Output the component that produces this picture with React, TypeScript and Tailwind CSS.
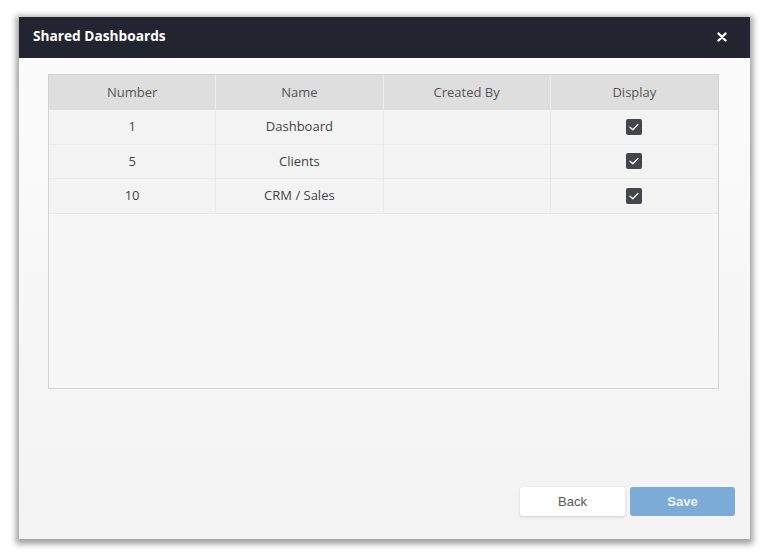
import React from "react";

const rows = [
  { n: "1", name: "Dashboard" },
  { n: "5", name: "Clients" },
  { n: "10", name: "CRM / Sales" },
];

function Check() {
  return (
    <span className="inline-flex h-[16px] w-[16px] items-center justify-center rounded-[2px] bg-[#43474c]">
      <svg width="12" height="12" viewBox="0 0 12 12" fill="none">
        <path d="M2 6.3 L4.8 8.8 L10 3.4" stroke="#ffffff" strokeWidth="1.3" strokeLinecap="round" strokeLinejoin="round" />
      </svg>
    </span>
  );
}

export default function App() {
  return (
    <div className="h-[552px] w-[766px] bg-white pt-[17px] pl-[19px]" style={{ fontFamily: '"Open Sans", sans-serif' }}>
      <div className="flex h-[522px] w-[731px] flex-col bg-gradient-to-b from-[#fcfcfc] to-[#f3f3f3] shadow-[0_2px_6px_3px_rgba(0,0,0,0.38)]">
        <div className="flex h-[41px] items-center justify-between bg-[#22242f] pb-[2px] pl-[14px] pr-[23px]">
          <span className="text-[13.7px] font-bold text-white">Shared Dashboards</span>
          <svg width="10" height="10" viewBox="0 0 10 10">
            <path d="M1.5 1.5 L8.5 8.5 M8.5 1.5 L1.5 8.5" stroke="#ffffff" strokeWidth="2.4" strokeLinecap="round" />
          </svg>
        </div>
        <div className="flex flex-1 flex-col">
          <div className="ml-[29px] mt-[16px] h-[315px] w-[671px] border border-[#d2d2d2] bg-[#f7f7f7]">
            <div className="grid h-[35px] grid-cols-4 bg-[#dedede] text-[13px] text-[#555]">
              {["Number", "Name", "Created By", "Display"].map((h, i) => (
                <div key={h} className={`flex items-center justify-center ${i < 3 ? "border-r border-[#ececec]" : ""}`}>
                  {h}
                </div>
              ))}
            </div>
            {rows.map((r) => (
              <div key={r.n} className="grid h-[34.5px] grid-cols-4 border-b border-[#e9e9e9] bg-[#f3f3f3] text-[13px] text-[#444]">
                <div className="flex items-center justify-center border-r border-[#e9e9e9]">{r.n}</div>
                <div className="flex items-center justify-center border-r border-[#e9e9e9]">{r.name}</div>
                <div className="flex items-center justify-center border-r border-[#e9e9e9]"></div>
                <div className="flex items-center justify-center">
                  <Check />
                </div>
              </div>
            ))}
          </div>
          <div className="mt-auto mb-[23px] mr-[15px] flex justify-end gap-[5px]" style={{ fontFamily: '"Liberation Sans", Arial, sans-serif' }}>
            <button className="h-[29px] w-[105px] rounded-[3px] bg-white text-[13px] text-[#555] shadow-[0_1px_3px_rgba(0,0,0,0.15)]">
              Back
            </button>
            <button className="h-[29px] w-[105px] rounded-[3px] bg-[#7babd6] text-[13px] font-bold text-[#eef4fa]">
              Save
            </button>
          </div>
        </div>
      </div>
    </div>
  );
}
